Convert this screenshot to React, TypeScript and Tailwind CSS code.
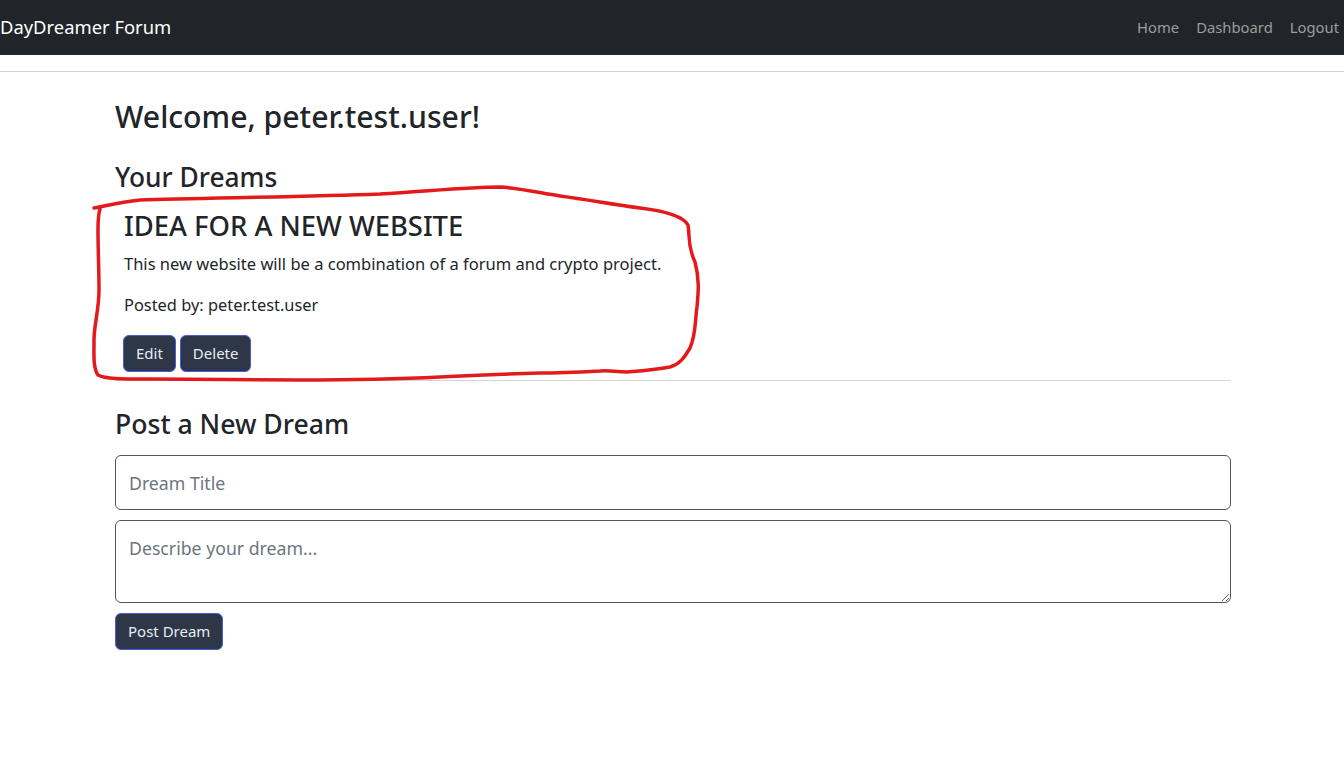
import React from "react";

const font = { fontFamily: '"Noto Sans", "Open Sans", sans-serif' };

function Btn({ children, className = "" }: { children: React.ReactNode; className?: string }) {
  return (
    <button
      className={
        "h-[37px] px-[12px] rounded-[6px] border border-[#4a5be0] bg-[#2d3748] text-[#e9ecef] text-[15px] leading-none " +
        className
      }
    >
      {children}
    </button>
  );
}

export default function App() {
  return (
    <div className="relative w-[1344px] h-[758px] bg-white text-[#212529] overflow-hidden" style={font}>
      <nav className="h-[55px] bg-[#212529] flex items-center">
        <span className="text-white text-[18.4px] leading-none">DayDreamer Forum</span>
        <div className="ml-auto flex items-center gap-[17px] pr-[5px] text-[14.8px] text-[#9a9da0]">
          <span>Home</span>
          <span>Dashboard</span>
          <span>Logout</span>
        </div>
      </nav>
      <div className="mt-[16px] h-px bg-[#d3d3d3]" />
      <div className="w-[1140px] mx-auto pl-[13px] pr-[11px]">
        <h2 className="mt-[26px] text-[30.2px] leading-[38px] font-medium">Welcome, peter.test.user!</h2>
        <h3 className="mt-[24px] text-[26.3px] leading-[34px] font-medium">Your Dreams</h3>
        <div className="px-[9px]">
          <h3 className="mt-[15px] text-[27.4px] leading-[34px] font-medium">IDEA FOR A NEW WEBSITE</h3>
          <p className="mt-[9px] text-[16.5px] leading-[24px]">
            This new website will be a combination of a forum and crypto project.
          </p>
          <p className="mt-[17px] text-[16.4px] leading-[24px]">Posted by: peter.test.user</p>
          <div className="mt-[18px] flex gap-[4px] -ml-[1px]">
            <Btn>Edit</Btn>
            <Btn>Delete</Btn>
          </div>
        </div>
        <div className="mt-[8px] h-px bg-[#d3d3d3]" />
        <h3 className="mt-[26px] text-[26.6px] leading-[34px] font-medium">Post a New Dream</h3>
        <input
          className="mt-[14px] block w-full h-[55px] rounded-[6px] border border-[#555] px-[13px] text-[17.7px] placeholder:text-[#6c757d] outline-none"
          placeholder="Dream Title"
        />
        <textarea
          className="mt-[10px] block w-full h-[83px] rounded-[6px] border border-[#555] px-[13px] pt-[14px] text-[17.7px] leading-[26px] placeholder:text-[#6c757d] outline-none"
          placeholder="Describe your dream..."
        />
        <Btn className="mt-[10px]">Post Dream</Btn>
      </div>
      <svg
        className="absolute left-0 top-0 pointer-events-none"
        width="1344"
        height="758"
        viewBox="0 0 1344 758"
      >
        <path
          d="M94 208 C105 206 120 202 140 200 C200 198 300 197 380 194 C430 191 470 187 500 187 C520 188 540 193 560 196 C590 200 610 204 640 208 C665 211 683 216 688 225 C690 235 687 245 695 262 C700 280 698 295 697 307 C695 320 696 335 690 348 C684 358 680 364 670 367 C655 370 640 371 627 372 C615 372 610 370 600 371 C580 372 560 373 540 373 C510 374 480 375 440 377 C400 379 350 380 300 380 C250 380 200 379 150 379 C120 379 105 379 98 375 C93 368 94 355 94 340 C94 325 99 310 99 290 C99 270 98 250 98 230 C98 218 99 212 100 209"
          fill="none"
          stroke="#e3191b"
          strokeWidth="3.5"
          strokeLinecap="round"
          strokeLinejoin="round"
        />
      </svg>
    </div>
  );
}
